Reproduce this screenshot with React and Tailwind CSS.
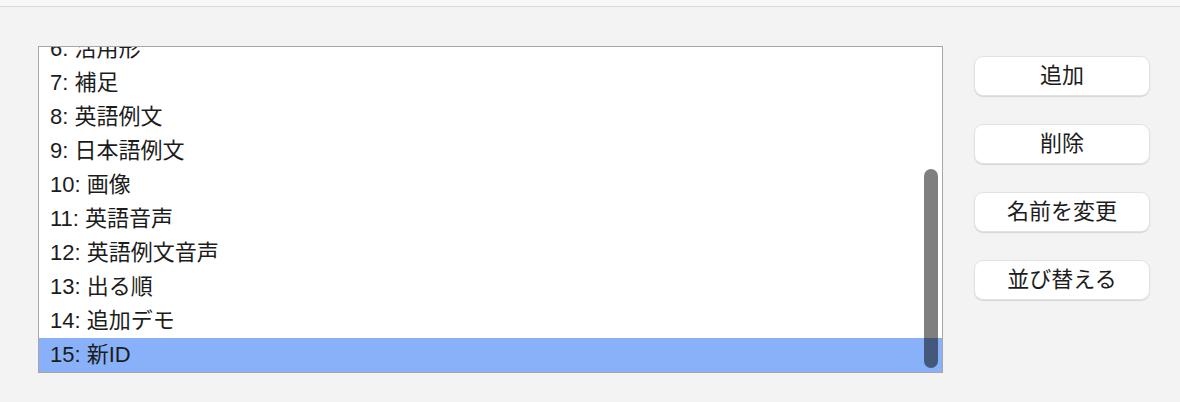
export default function App() {
  const rows = [
    "6: 活用形",
    "7: 補足",
    "8: 英語例文",
    "9: 日本語例文",
    "10: 画像",
    "11: 英語音声",
    "12: 英語例文音声",
    "13: 出る順",
    "14: 追加デモ",
    "15: 新ID",
  ];
  const buttons = ["追加", "削除", "名前を変更", "並び替える"];
  const font = { fontFamily: '"Liberation Sans", "Noto Sans CJK JP", sans-serif' };
  return (
    <div className="w-[1180px] h-[402px] bg-[#f3f3f3] overflow-hidden" style={font}>
      <div className="h-[7px] bg-[#f7f7f7] border-b border-[#dadada]" />
      <div className="flex pl-[38px] pt-[39px]">
        <div className="relative w-[905px] h-[327px] border border-[#a6a6a6] bg-white overflow-hidden flex flex-col justify-end">
          {rows.map((r, i) => (
            <div
              key={r}
              className={`h-[34px] shrink-0 flex items-center pl-[11px] text-[22px] leading-none text-[#1c1c1c] ${
                i === rows.length - 1 ? "bg-[#89b1f9]" : ""
              }`}
            >
              {r}
            </div>
          ))}
          <div className="absolute right-[4px] top-[122px] bottom-[4px] w-[14px] rounded-full bg-black/50" />
        </div>
        <div className="ml-[31px] pt-[10px] flex flex-col gap-[28px]">
          {buttons.map((b) => (
            <div
              key={b}
              className="w-[176px] h-[40px] rounded-[9px] bg-white border border-[#e2e2e2] shadow-[0_1px_1px_rgba(0,0,0,0.12)] flex items-center justify-center text-[22px] leading-none text-[#1c1c1c]"
            >
              {b}
            </div>
          ))}
        </div>
      </div>
    </div>
  );
}
